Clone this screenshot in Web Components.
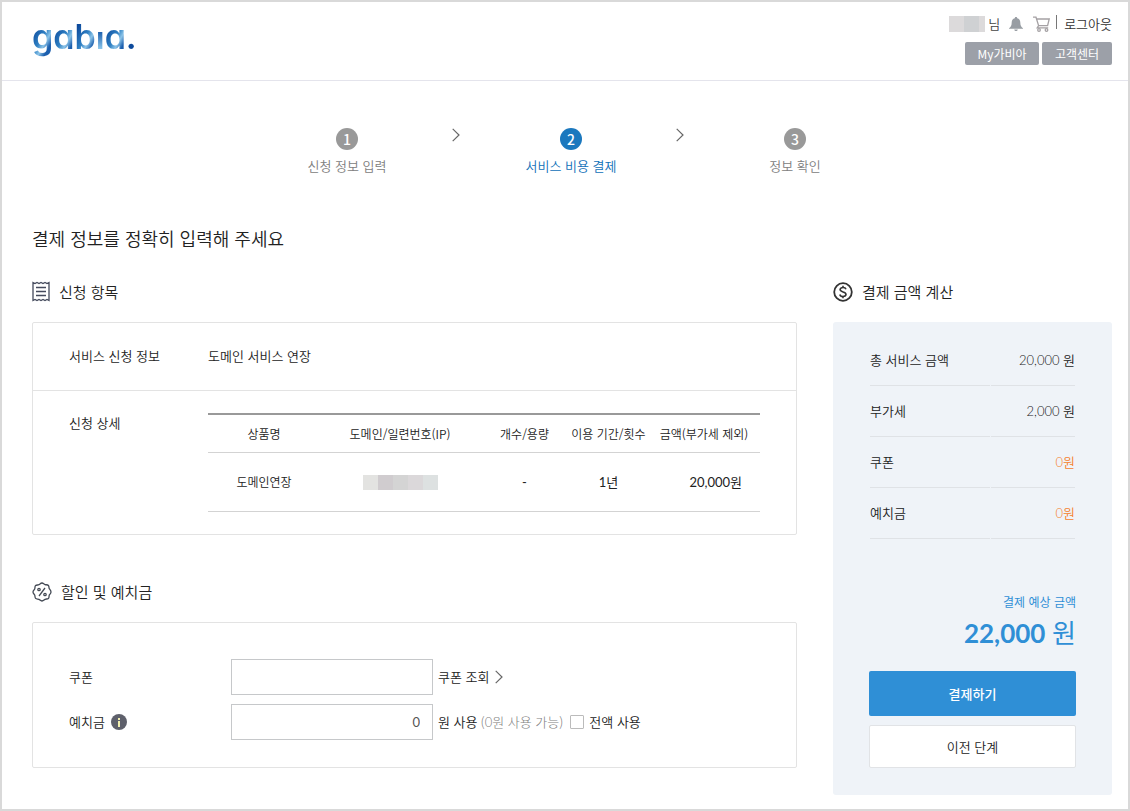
<!DOCTYPE html>
<html lang="ko">
<head>
<meta charset="utf-8">
<meta name="viewport" content="width=device-width, initial-scale=1">
<title>서비스 비용 결제</title>
<style>
  html { background: #fff; }
  body {
    margin: 0;
    color: #222;
    font: 350 13px/20px "Noto Sans CJK KR", "Noto Sans", sans-serif;
    --num: "Lato", "Noto Sans CJK KR", sans-serif;
    --line: #e3e3e3;
    --blue: #2f8fd6;
  }
</style>
</head>
<body>
<payment-page></payment-page>

<template id="t-page">
  <style>
    :host { display: block; box-sizing: border-box; min-height: 100vh; border: 2px solid #d9d9d9; background: #fff; }
    main { padding: 47px 16px 14px 30px; }
    h1 { margin: 48px 0 28px; font-size: 18px; line-height: 28px; font-weight: 350; color: #222; }
    .cols { display: grid; grid-template-columns: minmax(0, 1fr) 279px; gap: 36px; }
    .left { display: flex; flex-direction: column; gap: 45px; }
  </style>
  <site-header></site-header>
  <main>
    <step-nav>
      <step-item number="1">신청 정보 입력</step-item>
      <chevron-icon></chevron-icon>
      <step-item number="2" current>서비스 비용 결제</step-item>
      <chevron-icon></chevron-icon>
      <step-item number="3">정보 확인</step-item>
    </step-nav>
    <h1>결제 정보를 정확히 입력해 주세요</h1>
    <div class="cols">
      <div class="left">
        <titled-section>
          <svg slot="icon" width="18" height="22" viewBox="0 0 18 22" fill="none" stroke="#444a5c" stroke-width="1.3"><path d="M1 1.500l2 1 2-1 2 1 2-1 2 1 2-1 2 1 2-1v18l-2-1-2 1-2-1-2 1-2-1-2 1-2-1-2 1z"/><path d="M4 6.500h10M4 10.500h10M4 14.500h10" stroke-width="1.3"/></svg>
          <span slot="title">신청 항목</span>
          <order-details></order-details>
        </titled-section>
        <titled-section>
          <svg slot="icon" width="20" height="20" viewBox="0 0 20 20" fill="none" stroke="#444a55" stroke-width="1.3"><path d="M10 1c1.300 0 1.800 1.200 3 1.600s2.500-.2 3.400.9.300 2 .8 3 1.800 1.700 1.800 3.500-1.200 2-1.700 3.100.1 2.400-.9 3.300-2.200.4-3.300.9S11.500 19 10 19s-2-1.200-3.100-1.700-2.400.1-3.300-.9-.4-2.200-.9-3.300S1 11.500 1 10s1.200-2 1.700-3.100-.1-2.400.9-3.300 2.200-.4 3.300-.9S8.500 1 10 1z"/><path d="M13 6l-6 8"/><circle cx="7" cy="7.500" r="1.200"/><circle cx="13" cy="12.500" r="1.200"/></svg>
          <span slot="title">할인 및 예치금</span>
          <discount-form></discount-form>
        </titled-section>
      </div>
      <titled-section>
        <svg slot="icon" width="20" height="20" viewBox="0 0 20 20" fill="none" stroke="#333" stroke-width="1.800"><circle cx="10" cy="10" r="8.800"/><path d="M13 7.300C12.600 6 11.500 5.500 10 5.500c-1.700 0-2.900.8-2.900 2.100 0 3.100 5.900 1.500 5.900 4.700 0 1.400-1.300 2.200-3 2.200s-2.800-.8-3.200-2.100M10 3.800v1.700M10 14.500v1.700" stroke-width="1.600"/></svg>
        <span slot="title">결제 금액 계산</span>
        <payment-summary></payment-summary>
      </titled-section>
    </div>
  </main>
</template>

<template id="t-header">
  <style>
    :host { display: block; border-bottom: 1px solid #e4e4ec; }
    header { display: flex; justify-content: space-between; padding: 10px 16px 15px 30px; }
    .logo { font: 600 34px/44px "Inter", sans-serif; font-feature-settings: "cv11"; text-decoration: none; color: transparent; padding-top: 3px; }
    .logo span { background: linear-gradient(120deg, #0d4a9c 20%, #2f80c3 50%, #8cc4e8 64%, #1c5fae 78%); background-clip: text; -webkit-background-clip: text; }
    .logo .stem { background-image: linear-gradient(transparent 38%, #1c5fae 38%, #8cc6ea 80%); }
    .logo .dot { background-image: linear-gradient(#0d4a9c, #0d4a9c); }
    .side { display: flex; flex-direction: column; gap: 6px; align-items: flex-end; }
    .user, .links { display: flex; align-items: center; }
    .user { height: 24px; color: #444; }
    .mask { width: 36px; height: 16px; margin-right: 3px; background: linear-gradient(90deg, #dcdadb 0 15px, #cfd1d3 15px 30px, #dcdadb 30px); }
    .bell { margin-left: 9px; }
    .cart { margin-left: 10px; }
    .user svg, .user a { display: block; }
    .bar { width: 1px; height: 14px; margin: 0 7px 4px 6px; background: #777; }
    .user a { color: #333; text-decoration: none; }
    .links { gap: 3px; }
    .links button { height: 23px; border: 0; border-radius: 2px; padding: 0; background: #9ca0a8; color: #fff; font: 400 12px/20px "Noto Sans CJK KR", sans-serif; }
    .my { width: 74px; }
    .help { width: 70px; }
  </style>
  <header>
    <a class="logo" href="#"><span>g</span><span>a</span><span>b</span><span class="stem">i</span><span>a</span><span class="dot">.</span></a>
    <div class="side">
      <div class="user">
        <span class="mask"></span><span>님</span>
        <a class="bell" href="#" aria-label="알림"><svg width="14" height="14" viewBox="0 0 14 14" fill="#989da3"><path d="M7 0c.8 0 1.200.5 1.200 1.200C10.300 1.700 11.300 3.400 11.300 5.500c0 3.200.9 4.300 2.700 5.700v.6H0v-.6c1.800-1.400 2.700-2.500 2.700-5.700 0-2.100 1-3.800 3.100-4.300C5.800.5 6.200 0 7 0zM5.200 12.500h3.600C8.500 13.500 7.900 14 7 14s-1.500-.5-1.800-1.500z"/></svg></a>
        <a class="cart" href="#" aria-label="장바구니"><svg width="17" height="16" viewBox="0 0 17 16" fill="none" stroke="#a5a1a4" stroke-width="1.300"><path d="M0 1.200h3l2.600 8.500h9L16.200 3H4M5.600 9.700l-1.400 2.200h11"/><circle cx="6" cy="14" r="1.300"/><circle cx="13.500" cy="14" r="1.300"/></svg></a>
        <span class="bar"></span>
        <a href="#">로그아웃</a>
      </div>
      <div class="links"><button class="my" type="button">My가비아</button><button class="help" type="button">고객센터</button></div>
    </div>
  </header>
</template>

<template id="t-steps">
  <style>
    :host { display: grid; grid-template-columns: repeat(5, 112px); justify-content: center; justify-items: center; align-items: start; padding-right: 2px; }
    ::slotted(chevron-icon) { margin-right: 6px; }
  </style>
  <slot></slot>
</template>

<template id="t-step">
  <style>
    :host { display: flex; flex-direction: column; align-items: center; gap: 6px; color: #808080; }
    :host([current]) { color: #0f70b8; }
    .no { width: 22px; height: 22px; border-radius: 50%; background: #999; color: #fff; font: 500 14px/22px "Noto Sans CJK KR", sans-serif; text-align: center; }
    :host([current]) .no { background: #1b78be; }
    .name { white-space: nowrap; }
  </style>
  <span class="no"></span>
  <span class="name"><slot></slot></span>
</template>

<template id="t-chevron">
  <style>
    :host { display: block; width: 8px; height: 14px; }
    svg { display: block; }
  </style>
  <svg width="8" height="14" viewBox="0 0 8 14" fill="none" stroke="#666" stroke-width="1.200"><path d="M.7.900l6.300 6.100-6.300 6.100"/></svg>
</template>

<template id="t-section">
  <style>
    :host { display: block; }
    h2 { display: flex; align-items: center; gap: 9px; height: 24px; margin: 0 0 18px; font-size: 15px; line-height: 24px; font-weight: 350; color: #222; }
    ::slotted(svg) { display: block; }
  </style>
  <section>
    <h2><slot name="icon"></slot><slot name="title"></slot></h2>
    <slot></slot>
  </section>
</template>

<template id="t-order">
  <style>
    :host { display: block; border: 1px solid var(--line); border-radius: 2px; }
    .row { display: grid; grid-template-columns: 139px minmax(0, 1fr); padding: 22px 36px; }
    .row + .row { border-top: 1px solid var(--line); }
    .info { padding-block: 23px 24px; }
    table { width: 100%; border-collapse: separate; border-spacing: 0; table-layout: fixed; border-top: 2px solid #999; font-size: 12px; text-align: center; }
    th, td { padding: 0; font-weight: 350; border-bottom: 1px solid #d3d3d3; white-space: nowrap; }
    th { height: 37px; }
    td { height: 58px; }
    .edge { width: 112px; }
    .amount { width: 89px; }
    .term { width: 79px; }
    .num { font: 400 13px/20px var(--num); }
    .price { text-align: right; padding-right: 18px; }
    .mask { display: block; width: 75px; height: 15px; margin: 0 auto; background: linear-gradient(90deg, #e3e3e1 0 15px, #d0cccf 15px 30px, #d4d4d4 30px 45px, #dbd8da 45px 60px, #dde1e1 60px); }
  </style>
  <div class="row info"><span>서비스 신청 정보</span><span>도메인 서비스 연장</span></div>
  <div class="row">
    <span>신청 상세</span>
    <table>
      <thead><tr><th class="edge">상품명</th><th>도메인/일련번호(IP)</th><th class="amount">개수/용량</th><th class="term">이용 기간/횟수</th><th class="edge">금액(부가세 제외)</th></tr></thead>
      <tbody><tr><td>도메인연장</td><td><span class="mask"></span></td><td class="num">-</td><td class="num">1년</td><td class="num price">20,000원</td></tr></tbody>
    </table>
  </div>
</template>

<template id="t-discount">
  <style>
    :host { display: block; border: 1px solid var(--line); border-radius: 2px; }
    form { display: grid; gap: 9px; padding: 36px 36px 27px; }
    .row { display: grid; grid-template-columns: 162px 202px minmax(0, 1fr); align-items: center; }
    .name, .tail { display: flex; align-items: center; }
    .name { gap: 6px; }
    .tail { padding-left: 5px; white-space: nowrap; }
    input[type=text] { box-sizing: border-box; width: 100%; height: 36px; margin: 0; padding: 0 12px; border: 1px solid #c6c8ca; border-radius: 0; background: #fff; color: #555; font: 400 13px/20px var(--num); text-align: right; }
    button { display: flex; align-items: center; gap: 6px; padding: 0; border: 0; background: none; color: inherit; font: inherit; }
    .tip svg { display: block; }
    .hint { margin-left: 3px; color: #808080; font-weight: 300; }
    .hint b { font: 300 13px/20px var(--num); }
    input[type=checkbox] { appearance: none; width: 14px; height: 14px; margin: 0 5px 0 7px; border: 1px solid #bbb; border-radius: 1px; background: #fff; }
  </style>
  <form>
    <div class="row">
      <label class="name" for="coupon">쿠폰</label>
      <input type="text" id="coupon">
      <div class="tail"><button type="button">쿠폰 조회<chevron-icon></chevron-icon></button></div>
    </div>
    <div class="row">
      <div class="name"><label for="deposit">예치금</label><button class="tip" type="button" aria-label="예치금 안내"><svg width="16" height="16" viewBox="0 0 16 16"><circle cx="8" cy="8" r="8" fill="#5e606b"/><path d="M7 4h2v2H7zM7 7h2v6H7z" fill="#f1efb0"/></svg></button></div>
      <input type="text" id="deposit" value="0">
      <div class="tail"><span>원 사용</span><span class="hint">(<b>0</b>원 사용 가능)</span><input type="checkbox" id="all"><label for="all">전액 사용</label></div>
    </div>
  </form>
</template>

<template id="t-summary">
  <style>
    :host { display: block; padding: 13px 36px 27px; border-radius: 3px; background: #eff3f8; }
    table { width: 100%; border-collapse: separate; border-spacing: 1px 0; table-layout: fixed; }
    th, td { height: 50px; padding: 0; border-bottom: 1px solid #dfe2e6; font-weight: 350; }
    th { width: 120px; text-align: left; }
    td { font-family: var(--num); text-align: right; }
    .off { color: #f57f2b; }
    .label, .total { margin: 0; color: var(--blue); text-align: right; }
    .label { margin-top: 53px; font-size: 12px; font-weight: 400; }
    .total { margin: 5px 0 22px; font: 400 26px/32px var(--num); }
    .total b { font-weight: 700; }
    button { display: block; box-sizing: border-box; width: 100%; border-radius: 2px; padding: 0; font: 350 13px/20px "Noto Sans CJK KR", sans-serif; color: #222; }
    .pay { height: 45px; margin-bottom: 9px; border: 0; background: var(--blue); color: #fff; font-weight: 500; }
    .back { height: 43px; border: 1px solid #e1e3e6; background: #fff; }
  </style>
  <table>
    <tr><th>총 서비스 금액</th><td>20,000 원</td></tr>
    <tr><th>부가세</th><td>2,000 원</td></tr>
    <tr><th>쿠폰</th><td class="off">0원</td></tr>
    <tr><th>예치금</th><td class="off">0원</td></tr>
  </table>
  <p class="label">결제 예상 금액</p>
  <p class="total"><b>22,000</b> 원</p>
  <button class="pay" type="button">결제하기</button>
  <button class="back" type="button">이전 단계</button>
</template>

<script>
  class TemplateElement extends HTMLElement {
    constructor() {
      super();
      const template = document.getElementById(this.constructor.template);
      this.attachShadow({ mode: 'open' }).append(template.content.cloneNode(true));
    }
  }
  class StepItem extends TemplateElement {
    static template = 't-step';
    connectedCallback() {
      this.shadowRoot.querySelector('.no').textContent = this.getAttribute('number');
      if (this.hasAttribute('current')) this.setAttribute('aria-current', 'step');
    }
  }
  customElements.define('chevron-icon', class extends TemplateElement { static template = 't-chevron'; });
  customElements.define('step-item', StepItem);
  customElements.define('step-nav', class extends TemplateElement { static template = 't-steps'; });
  customElements.define('site-header', class extends TemplateElement { static template = 't-header'; });
  customElements.define('titled-section', class extends TemplateElement { static template = 't-section'; });
  customElements.define('order-details', class extends TemplateElement { static template = 't-order'; });
  customElements.define('discount-form', class extends TemplateElement { static template = 't-discount'; });
  customElements.define('payment-summary', class extends TemplateElement { static template = 't-summary'; });
  customElements.define('payment-page', class extends TemplateElement { static template = 't-page'; });
</script>
</body>
</html>
